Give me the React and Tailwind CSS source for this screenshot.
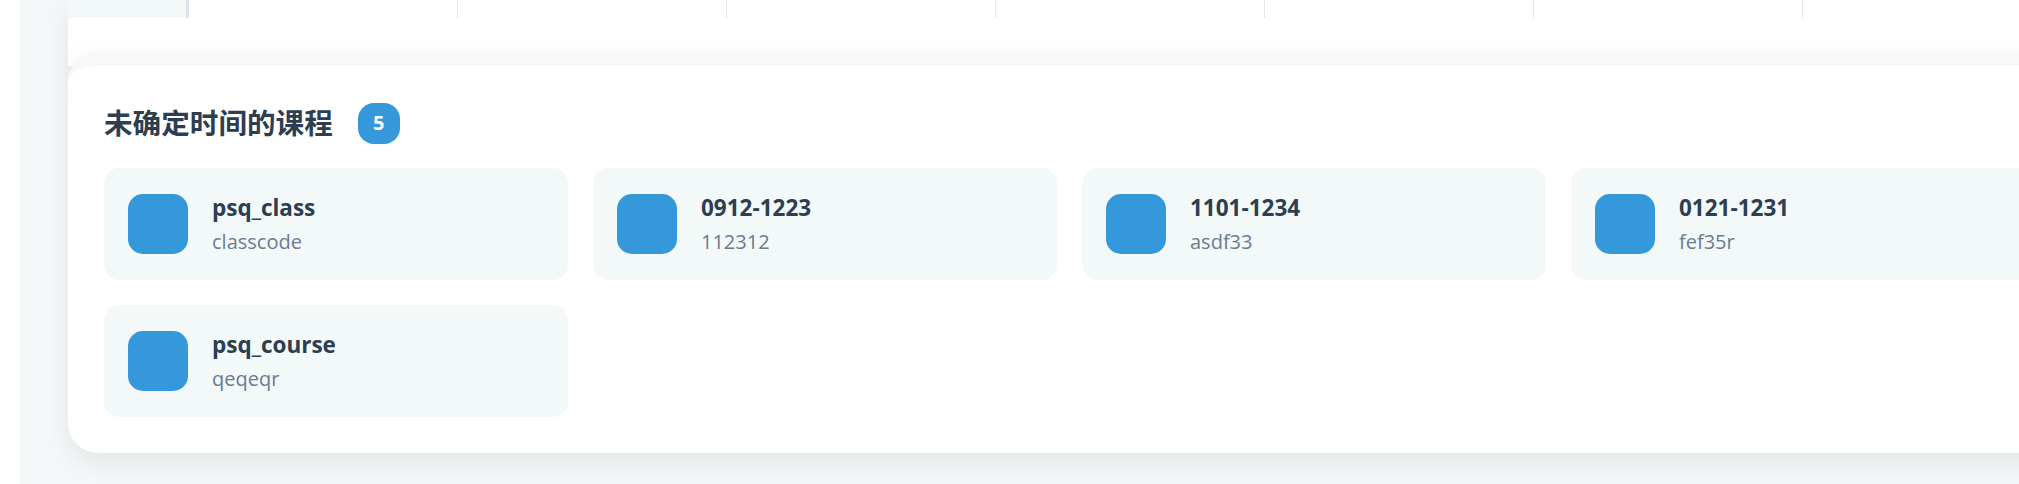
import React from "react";

const courses = [
  { name: "psq_class", code: "classcode" },
  { name: "0912-1223", code: "112312" },
  { name: "1101-1234", code: "asdf33" },
  { name: "0121-1231", code: "fef35r" },
  { name: "psq_course", code: "qeqeqr" },
];

function CourseCard({ course }) {
  return (
    <div className="flex h-[112px] items-center gap-[24px] rounded-[15px] bg-[#f3f8f8] px-[24px]">
      <div className="h-[60px] w-[60px] shrink-0 rounded-[15px] bg-[#3498db]" />
      <div className="flex flex-col pt-[2px]">
        <p className="text-[22.5px] font-bold leading-[30px] text-[#2c3e50]">{course.name}</p>
        <p className="mt-[4px] text-[20px] leading-[30px] text-[#6b7b92]">{course.code}</p>
      </div>
    </div>
  );
}

export default function App() {
  const dayCols = Array.from({ length: 7 });

  return (
    <div
      className="flex h-[484px] w-[2019px] overflow-hidden bg-white"
      style={{ fontFamily: '"Open Sans", "Noto Sans CJK SC", sans-serif' }}
    >
      <div className="w-[20px] shrink-0 bg-white" />
      <div className="flex flex-1 flex-col bg-[#f5f8f8] pl-[48px]">
        {/* bottom of the timetable card */}
        <div className="flex h-[66px] w-[2100px] shrink-0 flex-col bg-white shadow-[0_10px_30px_rgba(0,0,0,0.08)]">
          <div className="flex h-[18px]">
            <div className="w-[121px] shrink-0 border-r-[3px] border-[#dde0ef] bg-[#f3f8f8]" />
            {dayCols.map((_, i) => (
              <div key={i} className="w-[269px] shrink-0 border-r border-[#e5e7eb]" />
            ))}
          </div>
        </div>

        {/* unscheduled courses */}
        <div className="relative -mt-[14px] w-[2100px] shrink-0 rounded-[30px] border-t-[14px] border-[#f8f8f8] bg-white px-[36px] pb-[36px] pt-[36px] shadow-[0_10px_30px_rgba(0,0,0,0.08)]">
          <div className="mb-[24px] flex h-[42px] items-center">
            <h2 className="text-[28.6px] font-bold leading-none text-[#2c3e50]">未确定时间的课程</h2>
            <span className="ml-[25px] flex h-[41px] w-[42px] items-center justify-center rounded-[16px] bg-[#3498db] text-[20px] font-bold text-white">
              5
            </span>
          </div>
          <div className="grid grid-cols-[repeat(4,464px)] gap-[25px]">
            {courses.map((c) => (
              <CourseCard key={c.name} course={c} />
            ))}
          </div>
        </div>
      </div>
    </div>
  );
}
